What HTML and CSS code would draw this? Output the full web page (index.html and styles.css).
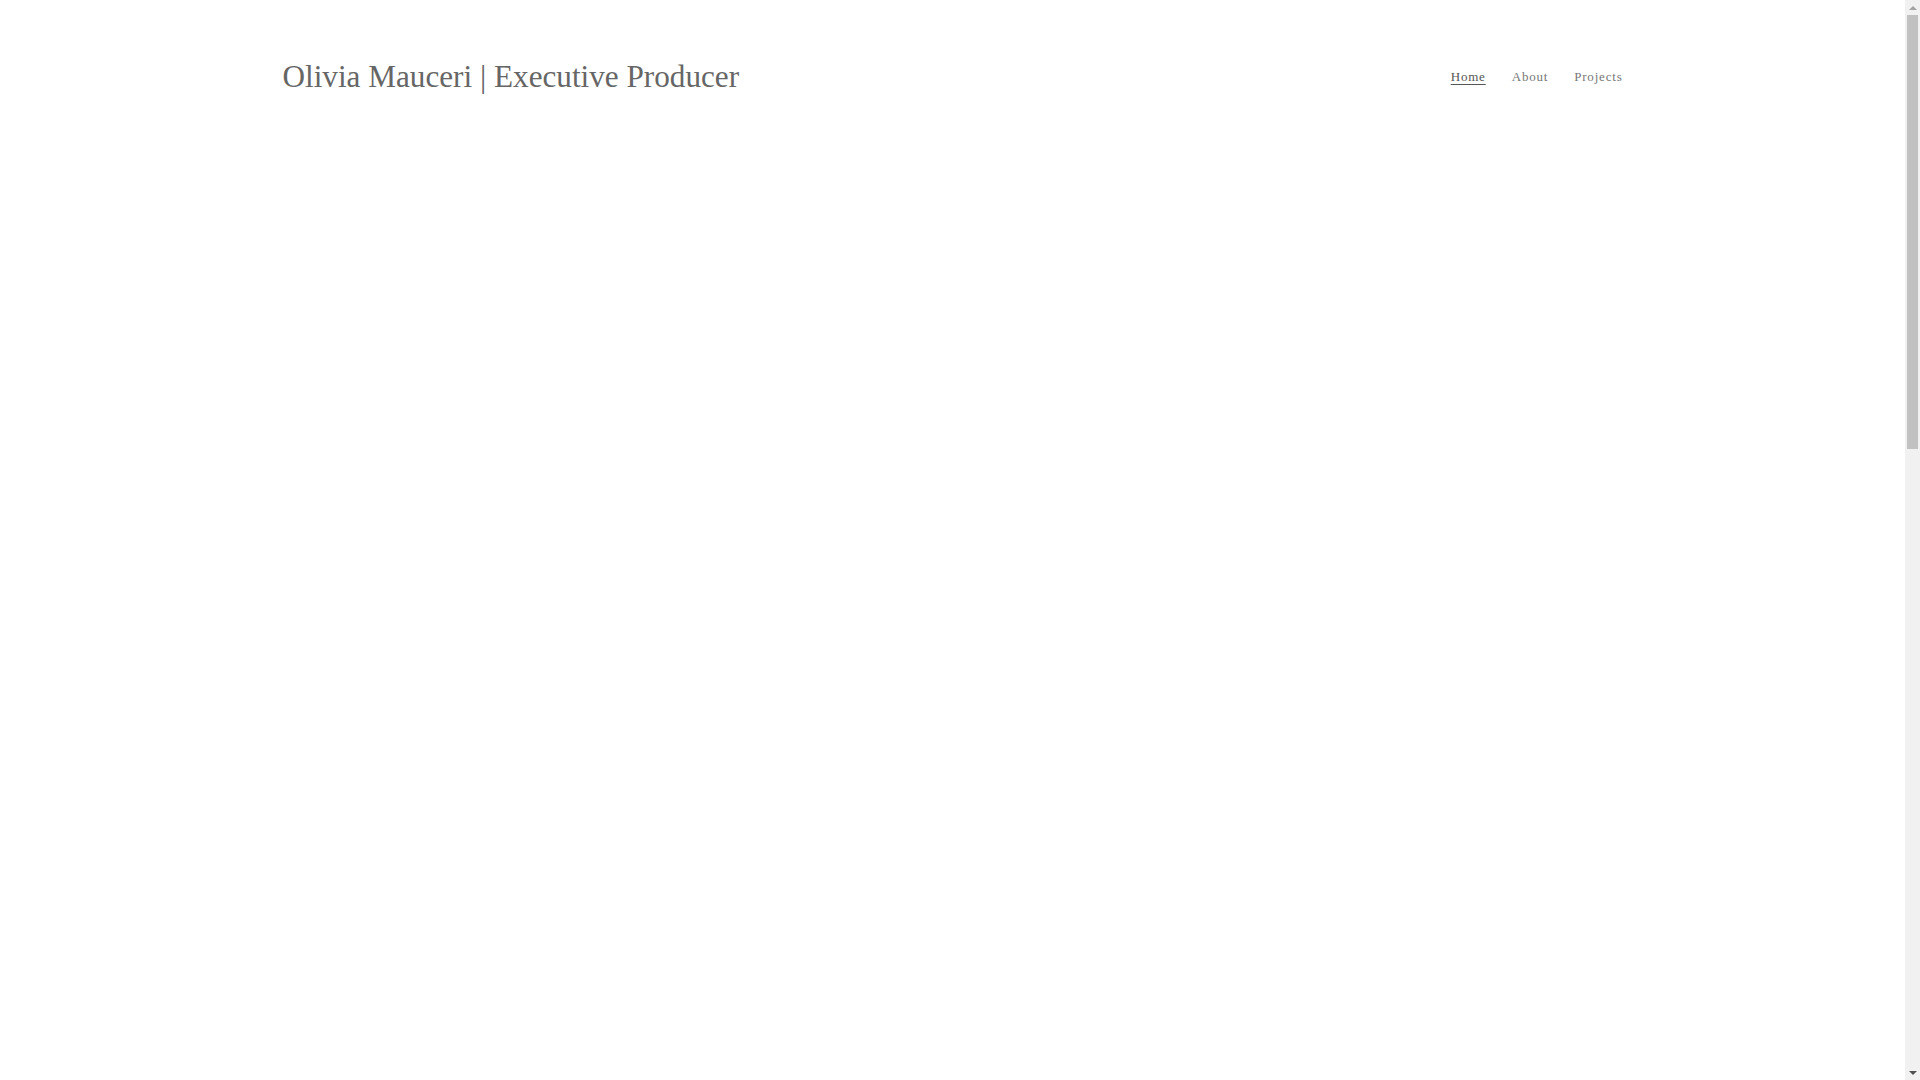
FILE: index.html
```html
<!DOCTYPE html>
<html lang="en">
<head>
<meta charset="utf-8">
<title>Olivia Mauceri | Executive Producer</title>
<link rel="stylesheet" href="styles.css">
</head>
<body>
<div class="viewport">
  <div class="scroll-area">
    <div class="page">
      <header class="header">
        <h1 class="site-title">Olivia Mauceri | Executive Producer</h1>
        <nav class="nav">
          <a class="nav-link active" href="#">Home</a>
          <a class="nav-link" href="#">About</a>
          <a class="nav-link" href="#">Projects</a>
        </nav>
      </header>
      <main class="content"></main>
    </div>
  </div>
  <div class="scrollbar" aria-hidden="true">
    <div class="sb-btn"><span class="arrow-up"></span></div>
    <div class="sb-track">
      <div class="sb-thumb"></div>
    </div>
    <div class="sb-btn"><span class="arrow-down"></span></div>
  </div>
</div>
</body>
</html>
```
FILE: styles.css
```css
html, body {
  margin: 0;
  padding: 0;
  background: #fff;
  overflow: hidden;
}
body {
  font-family: "Liberation Serif", "Times New Roman", serif;
  color: #666;
}
.viewport {
  display: flex;
  height: 100vh;
}
.scroll-area {
  flex: 1;
  overflow: hidden;
}
.page {
  width: 1340px;
  margin: 0 auto;
}
.header {
  display: flex;
  align-items: center;
  justify-content: space-between;
  height: 154px;
}
.site-title {
  margin: 0;
  font-weight: normal;
  font-size: 31.2px;
  color: #666;
}
.nav {
  display: flex;
  gap: 26px;
}
.nav-link {
  font-size: 13px;
  letter-spacing: 0.8px;
  color: #777;
  text-decoration: none;
}
.nav-link.active {
  color: #555;
  text-decoration: underline;
  text-underline-offset: 3px;
}
.content {
  height: 2460px;
}
.scrollbar {
  width: 15px;
  flex: none;
  background: #f1f1f1;
  display: flex;
  flex-direction: column;
}
.sb-btn {
  height: 15px;
  display: flex;
  align-items: center;
  justify-content: center;
}
.arrow-up {
  width: 0;
  height: 0;
  border-left: 4px solid transparent;
  border-right: 4px solid transparent;
  border-bottom: 4px solid #a3a3a3;
}
.arrow-down {
  width: 0;
  height: 0;
  border-left: 4px solid transparent;
  border-right: 4px solid transparent;
  border-top: 4px solid #505050;
}
.sb-track {
  flex: 1;
  padding: 0 2px;
}
.sb-thumb {
  height: 434px;
  background: #c1c1c1;
}
```
